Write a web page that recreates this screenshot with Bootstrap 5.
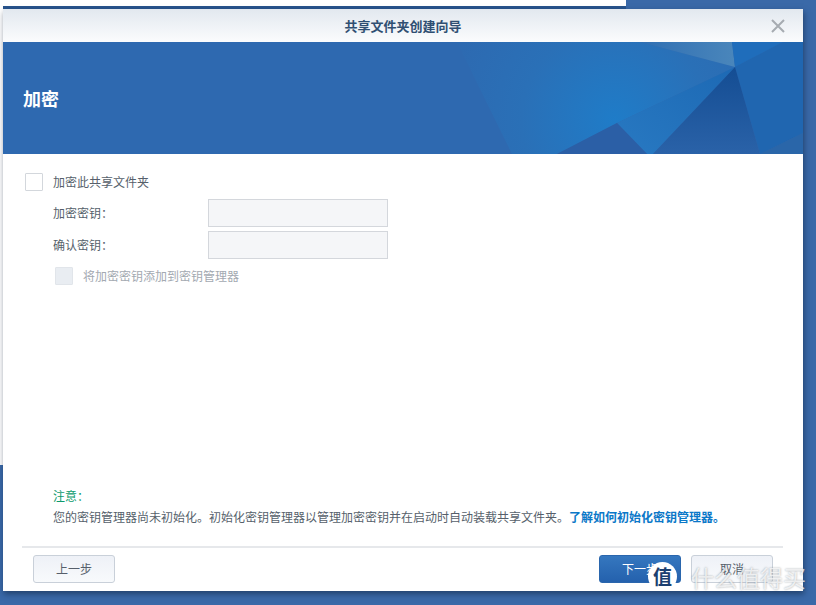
<!DOCTYPE html>
<html lang="zh-CN">
<head>
  <meta charset="UTF-8" />
  <meta name="viewport" content="width=device-width, initial-scale=1.0"/>
  <title>共享文件夹创建向导</title>
  <link href="https://cdn.jsdelivr.net/npm/bootstrap@5.3.0/dist/css/bootstrap.min.css" rel="stylesheet"/>
  <style>
    html, body {
      height: 100%;
    }
    body {
      background: #3a69a8;
      font-family: "Noto Sans CJK SC", "Liberation Sans", sans-serif;
      font-size: 12px;
      color: #565f6b;
      overflow: hidden;
    }
    .desk {
      position: relative;
      width: 816px;
      height: 605px;
      padding: 9px 13px 14px 3px;
    }
    /* window behind the wizard */
    .back-window {
      position: absolute;
      left: 0;
      top: 0;
      width: 626px;
      height: 465px;
      background: #fff;
    }
    .back-band {
      position: absolute;
      left: 3px;
      width: 623px;
      top: 6px;
      height: 3px;
      background: #28548d;
    }
    .wizard {
      position: relative;
      width: 800px;
      height: 582px;
      background: #fff;
      box-shadow: 1px 3px 6px rgba(10, 25, 50, .5);
    }
    .wiz-head {
      position: relative;
      height: 33px;
      background: linear-gradient(#e2e8ef, #fbfcfd);
      color: #2f4f72;
      font-size: 13px;
      font-weight: 700;
    }
    .wiz-close {
      position: absolute;
      right: 18px;
      top: 10px;
      line-height: 0;
    }
    .wiz-banner {
      position: relative;
      height: 112px;
      background: #2e69b0;
      color: #fff;
      font-size: 18px;
      font-weight: 700;
      padding-left: 20px;
    }
    .wiz-banner svg {
      position: absolute;
      left: 0;
      top: 0;
    }
    .wiz-banner span {
      position: relative;
    }
    .wiz-body {
      height: 392px;
      padding: 19px 22px 20px;
    }
    .check-box.form-check-input {
      width: 18px;
      height: 18px;
      margin: 0;
      flex: none;
      border-color: #d3d7dc;
      border-radius: 1px;
    }
    .check-box.form-check-input:disabled {
      background: #e9edf2;
      border-color: #e1e5ea;
      opacity: 1;
    }
    .check-text {
      margin-left: 10px;
    }
    .field-row {
      margin-top: 8px;
      padding-left: 28px;
    }
    .field-row + .field-row {
      margin-top: 4px;
    }
    .field-label {
      width: 155px;
      flex: none;
    }
    .field-input.form-control {
      width: 180px;
      height: 28px;
      border-radius: 0;
      border-color: #d4d7dc;
      background: #f5f6f8;
    }
    .sub-check {
      margin-top: 8px;
      padding-left: 30px;
      color: #a3a9b1;
    }
    .note-title {
      color: #0d9a6c;
      padding-left: 28px;
      line-height: 18px;
    }
    .note-text {
      padding-left: 28px;
      margin-top: 3px;
      line-height: 18px;
      white-space: nowrap;
    }
    .note-text a {
      color: #0b78c8;
      font-weight: 700;
      text-decoration: none;
    }
    .wiz-foot {
      height: 45px;
      margin: 0 20px 0 19px;
      padding: 7px 10px 0 11px;
      border-top: 2px solid #e6e8eb;
    }
    .foot-btn.btn {
      width: 82px;
      height: 28px;
      padding: 0;
      font-size: 12px;
      border-radius: 3px;
      color: #565f6b;
      border: 1px solid #c9d0d9;
      background: linear-gradient(#eef1f7, #f8fafc);
    }
    .foot-btn.btn-primary {
      color: #fff;
      border-color: #2a66ad;
      background: linear-gradient(#3577bf, #2461ad);
    }
    .foot-gap {
      margin-left: 10px;
    }
    /* watermark over the corner */
    .logo-mark {
      position: absolute;
      left: 648px;
      top: 562px;
      width: 29px;
      height: 29px;
      border-radius: 50%;
      background: #fff;
      color: #1c3f70;
      font-size: 19px;
      font-weight: 700;
      line-height: 28px;
      text-align: center;
    }
    .logo-text {
      position: absolute;
      left: 691px;
      top: 562px;
      font-size: 23px;
      line-height: 30px;
      white-space: nowrap;
      color: rgba(255, 255, 255, .75);
      text-shadow: 0 0 2px rgba(90, 100, 110, .6);
    }
  </style>
</head>
<body>
  <div class="desk">
    <div class="back-window"></div>
    <div class="back-band"></div>

    <div class="wizard d-flex flex-column">
      <div class="wiz-head d-flex align-items-center justify-content-center">
        共享文件夹创建向导
        <span class="wiz-close">
          <svg width="14" height="14" viewBox="0 0 14 14">
            <path d="M1 1L13 13M13 1L1 13" stroke="#a6abb1" stroke-width="2" fill="none"/>
          </svg>
        </span>
      </div>

      <div class="wiz-banner d-flex align-items-center">
        <svg width="800" height="112" viewBox="0 0 800 112">
          <defs>
            <radialGradient id="glow" gradientUnits="userSpaceOnUse" cx="612" cy="78" r="170">
              <stop offset="0" stop-color="#1f7cc8"/>
              <stop offset=".55" stop-color="#2a70b7"/>
              <stop offset="1" stop-color="#2d6ab1"/>
            </radialGradient>
            <linearGradient id="shard" x1="0" y1="1" x2="1" y2="0">
              <stop offset="0" stop-color="#2879c2"/>
              <stop offset="1" stop-color="#1d69b4"/>
            </linearGradient>
            <linearGradient id="dark" x1="0" y1="0" x2="0" y2="1">
              <stop offset="0" stop-color="#144d93"/>
              <stop offset="1" stop-color="#2a62a8"/>
            </linearGradient>
            <linearGradient id="top" x1="0" y1="0" x2="1" y2="0">
              <stop offset="0" stop-color="#2f6fb3"/>
              <stop offset="1" stop-color="#4a86bb"/>
            </linearGradient>
          </defs>
          <polygon points="454,0 637,0 732,25 614,81 554,112 509,112 474,41" fill="url(#glow)"/>
          <polygon points="637,0 729,0 732,25" fill="url(#top)"/>
          <polygon points="729,0 780,0 732,25" fill="#1f6dbb"/>
          <polygon points="780,0 800,0 800,91 757,112 732,25" fill="#2066b0"/>
          <polygon points="614,81 732,25 650,112 644,112" fill="url(#shard)"/>
          <polygon points="554,112 614,81 644,112" fill="#2b5fa6"/>
          <polygon points="650,112 732,25 757,112" fill="url(#dark)"/>
          <polygon points="757,112 800,91 800,112" fill="#2a66a9"/>
        </svg>
        <span>加密</span>
      </div>

      <div class="wiz-body d-flex flex-column">
        <div class="d-flex align-items-center">
          <input class="form-check-input check-box" type="checkbox" id="encrypt"/>
          <label class="check-text" for="encrypt">加密此共享文件夹</label>
        </div>
        <div class="field-row d-flex align-items-center">
          <label class="field-label">加密密钥：</label>
          <input class="form-control field-input" type="password" disabled/>
        </div>
        <div class="field-row d-flex align-items-center">
          <label class="field-label">确认密钥：</label>
          <input class="form-control field-input" type="password" disabled/>
        </div>
        <div class="sub-check d-flex align-items-center">
          <input class="form-check-input check-box" type="checkbox" disabled/>
          <span class="check-text">将加密密钥添加到密钥管理器</span>
        </div>

        <div class="mt-auto">
          <div class="note-title">注意：</div>
          <div class="note-text">您的密钥管理器尚未初始化。初始化密钥管理器以管理加密密钥并在启动时自动装载共享文件夹。<a href="#">了解如何初始化密钥管理器。</a></div>
        </div>
      </div>

      <div class="wiz-foot d-flex">
        <button class="btn foot-btn" type="button">上一步</button>
        <button class="btn btn-primary foot-btn ms-auto" type="button">下一步</button>
        <button class="btn foot-btn foot-gap" type="button">取消</button>
      </div>
    </div>

    <div class="logo-mark">值</div>
    <div class="logo-text">什么值得买</div>
  </div>

  <script src="https://cdn.jsdelivr.net/npm/bootstrap@5.3.0/dist/js/bootstrap.bundle.min.js"></script>
</body>
</html>
